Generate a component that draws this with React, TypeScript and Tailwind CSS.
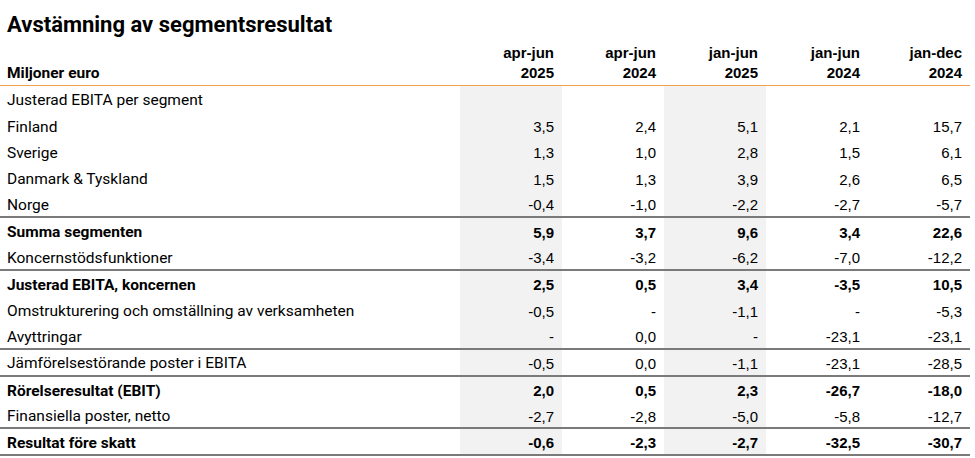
import React from "react";

type Row = { label: string; vals: string[]; bold?: boolean; line?: boolean };

const rows: Row[] = [
  { label: "Justerad EBITA per segment", vals: ["", "", "", "", ""] },
  { label: "Finland", vals: ["3,5", "2,4", "5,1", "2,1", "15,7"] },
  { label: "Sverige", vals: ["1,3", "1,0", "2,8", "1,5", "6,1"] },
  { label: "Danmark & Tyskland", vals: ["1,5", "1,3", "3,9", "2,6", "6,5"] },
  { label: "Norge", vals: ["-0,4", "-1,0", "-2,2", "-2,7", "-5,7"], line: true },
  { label: "Summa segmenten", vals: ["5,9", "3,7", "9,6", "3,4", "22,6"], bold: true },
  { label: "Koncernstödsfunktioner", vals: ["-3,4", "-3,2", "-6,2", "-7,0", "-12,2"], line: true },
  { label: "Justerad EBITA, koncernen", vals: ["2,5", "0,5", "3,4", "-3,5", "10,5"], bold: true },
  { label: "Omstrukturering och omställning av verksamheten", vals: ["-0,5", "-", "-1,1", "-", "-5,3"] },
  { label: "Avyttringar", vals: ["-", "0,0", "-", "-23,1", "-23,1"], line: true },
  { label: "Jämförelsestörande poster i EBITA", vals: ["-0,5", "0,0", "-1,1", "-23,1", "-28,5"], line: true },
  { label: "Rörelseresultat (EBIT)", vals: ["2,0", "0,5", "2,3", "-26,7", "-18,0"], bold: true },
  { label: "Finansiella poster, netto", vals: ["-2,7", "-2,8", "-5,0", "-5,8", "-12,7"], line: true },
  { label: "Resultat före skatt", vals: ["-0,6", "-2,3", "-2,7", "-32,5", "-30,7"], bold: true, line: true },
];

const heads = [
  ["apr-jun", "2025"],
  ["apr-jun", "2024"],
  ["jan-jun", "2025"],
  ["jan-jun", "2024"],
  ["jan-dec", "2024"],
];

export default function App() {
  return (
    <div className="w-[975px] h-[458px] bg-white text-black overflow-hidden">
      <div className="w-[970px]">
        <h1 className="pl-[7px] pt-[11px] h-[42px] text-[22px] leading-[28px] font-bold font-['Roboto',sans-serif]">
          Avstämning av segmentsresultat
        </h1>
        <div className="flex h-[44px] border-b-[1.5px] border-[#f0a050]">
          <div className="w-[460px] pl-[7px] flex items-end pb-[2px] text-[15.5px] font-bold leading-[20px] font-['Roboto',sans-serif]">
            Miljoner euro
          </div>
          {heads.map((h, i) => (
            <div
              key={i}
              className="w-[102px] pr-[8px] pt-[1px] text-right text-[15px] font-bold leading-[20px] font-['Liberation_Sans',Arial,sans-serif]"
            >
              <div>{h[0]}</div>
              <div>{h[1]}</div>
            </div>
          ))}
        </div>
        {rows.map((r, ri) => (
          <div
            key={ri}
            className={`flex h-[26.43px] ${r.line ? "border-b-2 border-[#7a7a7a]" : ""}`}
          >
            <div
              className={`w-[460px] pl-[7px] pt-[3px] flex items-center text-[15.5px] font-['Roboto',sans-serif] ${
                r.bold ? "font-bold" : ""
              }`}
            >
              {r.label}
            </div>
            {r.vals.map((v, vi) => (
              <div
                key={vi}
                className={`w-[102px] pr-[8px] pt-[3px] flex items-center justify-end text-[15px] font-['Liberation_Sans',Arial,sans-serif] ${
                  r.bold ? "font-bold" : ""
                } ${vi === 0 || vi === 2 ? "bg-[#f2f2f2]" : ""}`}
              >
                {v}
              </div>
            ))}
          </div>
        ))}
      </div>
    </div>
  );
}
